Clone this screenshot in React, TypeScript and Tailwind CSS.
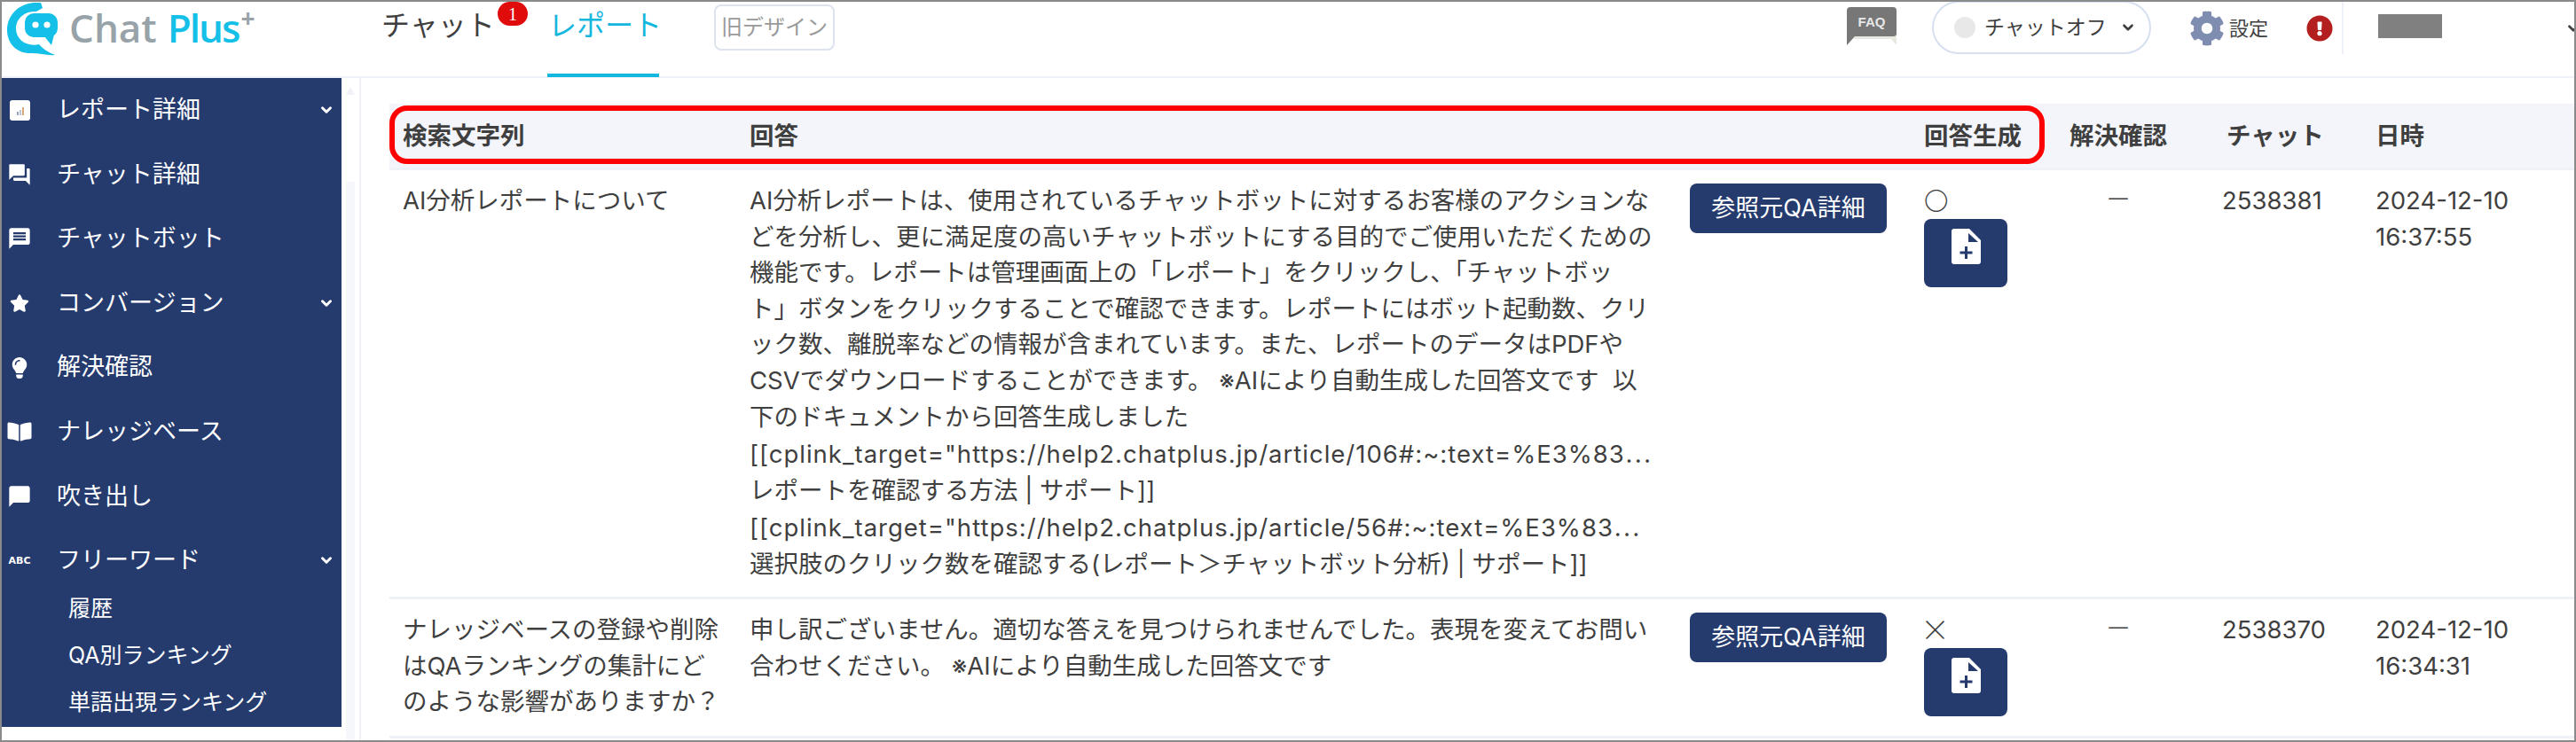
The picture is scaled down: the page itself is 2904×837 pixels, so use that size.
import { ChevronDown } from 'lucide-react';
import { FaBookOpen, FaCog, FaExclamationCircle, FaLightbulb, FaStar } from 'react-icons/fa';
import { MdChatBubble, MdForum, MdMessage } from 'react-icons/md';

const rowGrid = 'grid grid-cols-[406px_1060px_264px_164px_172px_173px_1fr]';

const answerLines = [
  'AI分析レポートは、使用されているチャットボットに対するお客様のアクションな',
  'どを分析し、更に満足度の高いチャットボットにする目的でご使用いただくための',
  '機能です。レポートは管理画面上の「レポート」をクリックし、「チャットボッ',
  'ト」ボタンをクリックすることで確認できます。レポートにはボット起動数、クリ',
  'ック数、離脱率などの情報が含まれています。また、レポートのデータはPDFや',
  'CSVでダウンロードすることができます。 ※AIにより自動生成した回答文です  以',
  '下のドキュメントから回答生成しました',
  '[[cplink_target="https://help2.chatplus.jp/article/106#:~:text=%E3%83⋯',
  'レポートを確認する方法 | サポート]]',
  '[[cplink_target="https://help2.chatplus.jp/article/56#:~:text=%E3%83⋯',
  '選択肢のクリック数を確認する(レポート＞チャットボット分析) | サポート]]',
];

const rows = [
  {
    query: ['AI分析レポートについて'],
    answer: answerLines,
    mark: '〇',
    markClass: 'h-[42px] -mt-[2px] font-light',
    chat: '2538381',
    date: ['2024-12-10', '16:37:55'],
    height: 'h-[484px]',
  },
  {
    query: ['ナレッジベースの登録や削除', 'はQAランキングの集計にど', 'のような影響がありますか？'],
    answer: [
      '申し訳ございません。適切な答えを見つけられませんでした。表現を変えてお問い',
      '合わせください。 ※AIにより自動生成した回答文です',
    ],
    mark: '×',
    markClass: 'h-[42px] -mt-[2px] -ml-[4px] font-light text-[33px]',
    chat: '2538370',
    date: ['2024-12-10', '16:34:31'],
    height: 'h-[157px]',
  },
];

function Lines({ lines }: { lines: string[] }) {
  return (
    <>
      {lines.map((line) =>
        line.endsWith('⋯') ? (
          // truncated link: the latin runs wider here and the ellipsis comes from the CJK font
          <div key={line} className="whitespace-pre tracking-[1px]">
            {line.slice(0, -1)}
            <span className="font-['Noto_Sans_CJK_JP',sans-serif]">⋯</span>
          </div>
        ) : (
          <div key={line} className="whitespace-pre">
            {line}
          </div>
        ),
      )}
    </>
  );
}

function ReportIcon() {
  return (
    <svg viewBox="0 0 23 23" className="w-[23px] h-[23px]">
      <rect width="23" height="23" rx="3" fill="#fff" />
      <rect x="8" y="13" width="2" height="4" fill="#9aa6c0" />
      <rect x="11" y="11" width="2" height="6" fill="#c0c8d8" />
      <rect x="14" y="8" width="2" height="9" fill="#d8a878" />
    </svg>
  );
}

function FilePlusIcon() {
  return (
    <svg viewBox="0 0 33 40" className="w-[33px] h-[40px]">
      <path d="M3 0H20L33 13V37a3 3 0 0 1-3 3H3a3 3 0 0 1-3-3V3a3 3 0 0 1 3-3Z" fill="#fff" />
      <path d="M19 5L30 15H19Z" fill="#253b6e" />
      <path d="M16.5 20V34M9.5 27H23.5" stroke="#253b6e" strokeWidth="3" />
    </svg>
  );
}

function SideItem({ icon, label, open }: { icon: React.ReactNode; label: string; open?: boolean }) {
  return (
    <div className="flex items-center h-[72.6px] text-[27px] text-white">
      <span className="flex justify-center w-[38px] ml-[1px]">{icon}</span>
      <span className="ml-[23px] flex-1">{label}</span>
      {open && <ChevronDown className="w-[18px] h-[18px] mr-[8px]" strokeWidth={4} />}
    </div>
  );
}

function Header() {
  return (
    <header className="flex items-start h-[86px] border-b-2 border-[#eef1f8] text-[#3f3f3f] *:shrink-0">
      <div className="flex w-[428px] pl-[6px] pt-[1px]">
        <svg viewBox="0 0 58 60" className="w-[58px] h-[60px] shrink-0">
          <path
            d="M38 0C14-2 0 14 0 31C0 47 12 58 28 57C36 57 46 60 54 59C46 56 40 52 36 47C22 50 10 42 10 29C10 18 20 9 33 10L40 6Z"
            fill="#14c0e8"
          />
          <rect x="20" y="12" width="37" height="27" rx="10" fill="#14c0e8" />
          <path d="M42 38L53 36L50 48Z" fill="#14c0e8" />
          <circle cx="32" cy="25" r="3.6" fill="#fff" />
          <circle cx="45" cy="25" r="3.6" fill="#fff" />
        </svg>
        <div className="ml-[12px] mt-[3px] flex items-start font-['Open_Sans',sans-serif] font-semibold text-[44px] leading-[50px]">
          <span className="text-[#98a3a9]">Chat</span>
          <span className="ml-[12px] tracking-[-2px] text-[#14c0e8]">Plus</span>
          <span className="ml-[2px] -mt-[1px] text-[#98a3a9] font-bold text-[28px] leading-[30px]">+</span>
        </div>
      </div>

      <div className="relative w-[187px] h-[85px] text-[32px] leading-[54px]">
        チャット
        <span className="absolute left-[131px] top-0 flex items-center justify-center w-[34px] h-[27px] rounded-full bg-[#e00c0c] text-white text-[20px] leading-none font-['Liberation_Serif',serif]">
          1
        </span>
      </div>
      <div className="w-[126px] h-[85px] pl-[1px] border-b-4 border-[#14b7dd] text-[#14b7dd] text-[32px] leading-[54px] whitespace-nowrap">
        レポート
      </div>
      <div className="ml-[62px] mt-[3px] flex items-center justify-center w-[136px] h-[52px] rounded-lg border-2 border-[#dde3ef] text-[#9a9a9a] text-[24px] whitespace-nowrap">
        旧デザイン
      </div>

      <svg viewBox="0 0 56 43" className="ml-[1141px] mt-[6px] w-[56px] h-[43px]">
        <path d="M8 33H56V43L50 36H8Z" fill="#e8e8e0" />
        <path d="M4 0H52a4 4 0 0 1 4 4V30a3 3 0 0 1-3 3H9L0 43V4a4 4 0 0 1 4-4Z" fill="#777" />
        <text x="28" y="22" textAnchor="middle" fill="#e8e8e8" fontSize="15" fontWeight="700" fontFamily="Liberation Sans, sans-serif">
          FAQ
        </text>
      </svg>

      <div className="ml-[40px] flex items-center w-[247px] h-[60px] rounded-[30px] border-2 border-[#d6e0f0] pl-[23px] -mt-[1px]">
        <span className="w-[24px] h-[24px] rounded-full bg-[#e8e8e8]" />
        <span className="ml-[10px] text-[23px] whitespace-nowrap">チャットオフ</span>
        <ChevronDown className="ml-[15px] w-[18px] h-[18px]" strokeWidth={3.5} />
      </div>

      <FaCog className="ml-[43px] mt-[10px] w-[40px] h-[40px] text-[#7f8db0]" />
      <span className="ml-[5px] mt-[12px] text-[22px] leading-[36px] whitespace-nowrap">設定</span>
      <FaExclamationCircle className="ml-[43px] mt-[15px] w-[30px] h-[30px] text-[#b31e1e]" />
      <span className="ml-[10px] w-[2px] h-[59px] bg-[#eef1f8]" />
      <span className="ml-[39px] mt-[14px] w-[72px] h-[27px] bg-[#808080]" />
      <ChevronDown className="ml-[139px] mt-[21px] w-[18px] h-[18px]" strokeWidth={3.5} />
    </header>
  );
}

function Sidebar() {
  return (
    <aside className="w-[383px] h-[732px] bg-[#253b6e] shrink-0">
      <SideItem icon={<ReportIcon />} label="レポート詳細" open />
      <SideItem icon={<MdForum className="w-[28px] h-[28px]" />} label="チャット詳細" />
      <SideItem icon={<MdMessage className="w-[28px] h-[28px]" />} label="チャットボット" />
      <SideItem icon={<FaStar className="w-[22px] h-[22px]" />} label="コンバージョン" open />
      <SideItem icon={<FaLightbulb className="w-[24px] h-[24px]" />} label="解決確認" />
      <SideItem icon={<FaBookOpen className="w-[28px] h-[24px]" />} label="ナレッジベース" />
      <SideItem icon={<MdChatBubble className="w-[28px] h-[28px]" />} label="吹き出し" />
      <SideItem
        icon={<span className="font-['DejaVu_Sans',sans-serif] font-bold text-[11px] leading-none">ABC</span>}
        label="フリーワード"
        open
      />
      <div className="-mt-[9px] pl-[75px] text-white text-[25px] leading-[53px]">
        <div>履歴</div>
        <div>QA別ランキング</div>
        <div>単語出現ランキング</div>
      </div>
    </aside>
  );
}

export default function App() {
  return (
    <div className="w-[2904px] h-[837px] overflow-hidden border-2 border-[#8a8a8a] bg-white font-['Inter','Noto_Sans_CJK_JP',sans-serif]">
      <Header />
      <div className="flex h-[747px]">
        <Sidebar />
        {/* scrollbar gutter */}
        <div className="flex flex-col items-center ml-[5px] w-[10px] mr-[5px]">
          <svg viewBox="0 0 10 10" className="mt-[9px] w-[10px] h-[10px]">
            <path d="M5 1L10 10H0Z" fill="#f0f2f8" />
          </svg>
          <div className="mt-[98px] w-full flex-1 bg-[#f5f7fb]" />
        </div>
        <main className="flex-1 min-w-0 border-l-2 border-[#eef1f8] pl-[32px] pt-[29px] text-[#3f3f3f] text-[27.5px] leading-[40.6px]">
          <div className="relative">
            <div className={`${rowGrid} h-[75px] items-center bg-[#f3f5fa] border-b-[3px] border-[#eef1f8] font-bold`}>
              <div className="pl-[15px]">検索文字列</div>
              <div>回答</div>
              <div />
              <div>回答生成</div>
              <div className="w-[110px] text-center">解決確認</div>
              <div className="w-[116px] pl-[5px] whitespace-nowrap">チャット</div>
              <div>日時</div>
            </div>
            <div className="absolute left-0 top-[2px] w-[1866px] h-[66px] rounded-[20px] border-[6px] border-[#ff0000]" />

            {rows.map((row) => (
              <div key={row.chat} className={`${rowGrid} ${row.height} border-b-[3px] border-[#eef1f8]`}>
                <div className="pl-[15px] pt-[14px]">
                  <Lines lines={row.query} />
                </div>
                <div className="pt-[14px]">
                  <Lines lines={row.answer} />
                </div>
                <div className="pt-[15px]">
                  <button className="w-[222px] h-[56px] rounded-lg bg-[#253b6e] text-white text-[27px] whitespace-nowrap">
                    参照元QA詳細
                  </button>
                </div>
                <div className="pt-[15px]">
                  <div className={`font-['Noto_Sans_CJK_JP',sans-serif] ${row.markClass}`}>{row.mark}</div>
                  <button className="flex justify-center w-[94px] h-[77px] pt-[11px] rounded-lg bg-[#253b6e]">
                    <FilePlusIcon />
                  </button>
                </div>
                <div className="w-[110px] pt-[13px] text-center font-light">ー</div>
                <div className="pt-[14px]">{row.chat}</div>
                <div className="pt-[14px]">
                  <Lines lines={row.date} />
                </div>
              </div>
            ))}
          </div>
        </main>
      </div>
    </div>
  );
}
